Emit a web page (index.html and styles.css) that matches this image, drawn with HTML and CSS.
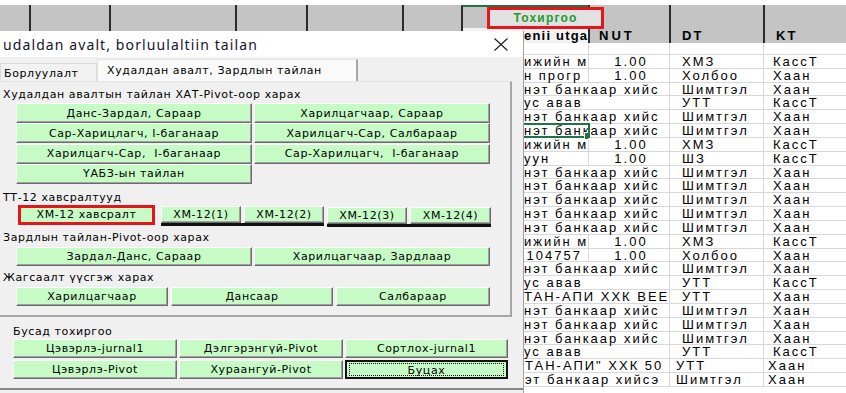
FILE: index.html
```html
<!DOCTYPE html>
<html>
<head>
	<meta charset="utf-8">
	<meta name="viewport" content="width=device-width, initial-scale=1">
	<title>Тохиргоо</title>
	<link rel="stylesheet" href="styles.css">
</head>
<body>
	<div class="sheet">
		<div class="colbar">
			<div></div><div></div><div></div><div></div><div></div><div></div>
			<div class="sel-col"><span class="hd hd-text">enii utga</span></div>
			<div><span class="hd hd-num">NUT</span></div>
			<div><span class="hd">DT</span></div>
			<div><span class="hd">KT</span></div>
		</div>
		<div class="row blank"><i></i><span class="t"></span><span class="n"></span><span class="d"></span><span class="k"></span></div>
		<div class="row"><i></i><span class="t">ижийн м</span><span class="n">1.00</span><span class="d">ХМЗ</span><span class="k">КассТ</span></div>
		<div class="row"><i></i><span class="t">н прогр</span><span class="n">1.00</span><span class="d">Холбоо</span><span class="k">Хаан</span></div>
		<div class="row"><i></i><span class="t w">нэт банкаар хийс</span><span class="d">Шимтгэл</span><span class="k">Хаан</span></div>
		<div class="row"><i></i><span class="t w">ус авав</span><span class="d">УТТ</span><span class="k">КассТ</span></div>
		<div class="row"><i></i><span class="t w">нэт банкаар хийс</span><span class="d">Шимтгэл</span><span class="k">Хаан</span></div>
		<div class="row"><i></i><span class="t w">нэт банкаар хийс</span><span class="d">Шимтгэл</span><span class="k">Хаан</span><b class="cursor"></b></div>
		<div class="row"><i></i><span class="t">ижийн м</span><span class="n">1.00</span><span class="d">ХМЗ</span><span class="k">КассТ</span></div>
		<div class="row"><i></i><span class="t">уун</span><span class="n">1.00</span><span class="d">ШЗ</span><span class="k">КассТ</span></div>
		<div class="row"><i></i><span class="t w">нэт банкаар хийс</span><span class="d">Шимтгэл</span><span class="k">Хаан</span></div>
		<div class="row"><i></i><span class="t w">нэт банкаар хийс</span><span class="d">Шимтгэл</span><span class="k">Хаан</span></div>
		<div class="row"><i></i><span class="t w">нэт банкаар хийс</span><span class="d">Шимтгэл</span><span class="k">Хаан</span></div>
		<div class="row"><i></i><span class="t w">нэт банкаар хийс</span><span class="d">Шимтгэл</span><span class="k">Хаан</span></div>
		<div class="row"><i></i><span class="t w">нэт банкаар хийс</span><span class="d">Шимтгэл</span><span class="k">Хаан</span></div>
		<div class="row"><i></i><span class="t">ижийн м</span><span class="n">1.00</span><span class="d">ХМЗ</span><span class="k">КассТ</span></div>
		<div class="row"><i></i><span class="t num">104757</span><span class="n">1.00</span><span class="d">Холбоо</span><span class="k">Хаан</span></div>
		<div class="row"><i></i><span class="t w">нэт банкаар хийс</span><span class="d">Шимтгэл</span><span class="k">Хаан</span></div>
		<div class="row"><i></i><span class="t w">ус авав</span><span class="d">УТТ</span><span class="k">КассТ</span></div>
		<div class="row"><i></i><span class="t w">ТАН-АПИ ХХК ВЕЕ</span><span class="d">УТТ</span><span class="k">Хаан</span></div>
		<div class="row"><i></i><span class="t w">нэт банкаар хийс</span><span class="d">Шимтгэл</span><span class="k">Хаан</span></div>
		<div class="row"><i></i><span class="t w">нэт банкаар хийс</span><span class="d">Шимтгэл</span><span class="k">Хаан</span></div>
		<div class="row"><i></i><span class="t w">нэт банкаар хийс</span><span class="d">Шимтгэл</span><span class="k">Хаан</span></div>
		<div class="row"><i></i><span class="t w">ус авав</span><span class="d">УТТ</span><span class="k">КассТ</span></div>
		<div class="row shift"><i></i><span class="t w">ТАН-АПИ" ХХК 50</span><span class="d">УТТ</span><span class="k">Хаан</span></div>
		<div class="row shift"><i></i><span class="t w">эт банкаар хийсэ</span><span class="d">Шимтгэл</span><span class="k">Хаан</span></div>
	</div>

	<div class="setting-btn"><span>Тохиргоо</span></div>

	<div class="dialog">
		<div class="titlebar">
			<span class="title">udaldan avalt, borluulaltiin tailan</span>
			<svg class="close" width="16" height="13" viewBox="0 0 16 13">
				<path d="M1.5 0.5L14.5 12.5M14.5 0.5L1.5 12.5" stroke="#1a1a1a" stroke-width="1.1" fill="none"/>
			</svg>
		</div>
		<div class="tabs">
			<span class="tab">Борлуулалт</span>
			<span class="tab active">Худалдан авалт, Зардлын тайлан</span>
		</div>
		<div class="page">
			<div class="cap cap-1">Худалдан авалтын тайлан ХАТ-Pivot-oop харах</div>
			<div class="grid2 grid-1">
				<button>Данс-Зардал, Сараар</button>
				<button>Харилцагчаар, Сараар</button>
				<button>Сар-Харицлагч, I-баганаар</button>
				<button>Харилцагч-Сар, Салбараар</button>
				<button>Харилцагч-Сар,&nbsp; I-баганаар</button>
				<button>Сар-Харилцагч,&nbsp; I-баганаар</button>
				<button>ҮАБЗ-ын тайлан</button>
			</div>

			<div class="cap cap-2">ТТ-12 хавсралтууд</div>
			<div class="xm-row">
				<button class="marked">ХМ-12 хавсралт</button>
				<div class="xm-pair">
					<button>ХМ-12(1)</button>
					<button>ХМ-12(2)</button>
				</div>
				<div class="xm-pair low">
					<button>ХМ-12(3)</button>
					<button class="wider">ХМ-12(4)</button>
				</div>
			</div>

			<div class="cap cap-3">Зардлын тайлан-Pivot-oop харах</div>
			<div class="grid2 grid-3">
				<button>Зардал-Данс, Сараар</button>
				<button>Харилцагчаар, Зардлаар</button>
			</div>

			<div class="cap cap-4">Жагсаалт үүсгэж харах</div>
			<div class="grid3 grid-4">
				<button>Харилцагчаар</button>
				<button>Дансаар</button>
				<button>Салбараар</button>
			</div>
		</div>
		<div class="more">
			<div class="cap">Бусад тохиргоо</div>
			<div class="grid-more">
				<button>Цэвэрлэ-jurnal1</button>
				<button>Дэлгэрэнгүй-Pivot</button>
				<button>Сортлох-jurnal1</button>
				<button>Цэвэрлэ-Pivot</button>
				<button>Хураангуй-Pivot</button>
				<button class="focus"><span>Буцах</span></button>
			</div>
		</div>
	</div>
</body>
</html>
```
FILE: styles.css
```css
* {
	box-sizing: border-box;
}
body {
	margin: 0;
	width: 846px;
	height: 393px;
	overflow: hidden;
	position: relative;
	background: #fff;
	font-family: "Liberation Sans", Arial, sans-serif;
	color: #000;
}

/* spreadsheet behind the form */
.sheet {
	padding-top: 5px;
}
.colbar {
	height: 38px;
	background: #c4c4c4;
	display: grid;
	grid-template-columns: 29px 80px 126px 71px 96px 59px 127px 81px 94px 1fr;
}
.colbar > div {
	border-left: 2px solid #2b2b2b;
	display: flex;
	flex-direction: column;
	justify-content: flex-end;
	min-width: 0;
}
.colbar > div:first-child {
	border-left: 0;
}
.colbar .sel-col {
	border-top: 2px solid #217346;
}
.hd {
	height: 15px;
	line-height: 15px;
	font-weight: bold;
	font-size: 13px;
	letter-spacing: 2px;
	white-space: nowrap;
	overflow: hidden;
	padding-left: 11px;
}
.hd-text {
	background: #f2f2f2;
	padding-left: 61px;
	letter-spacing: 1.2px;
}
.hd-num {
	padding-left: 9px;
	letter-spacing: 3px;
}

.row {
	display: grid;
	grid-template-columns: 461px 128px 81px 94px 1fr;
	height: 13.83px;
	border-bottom: 1px solid #d8d8d8;
	font-size: 13px;
	line-height: 13px;
	letter-spacing: 2px;
	position: relative;
}
.row.blank {
	height: 12px;
}
.row > * {
	border-right: 1px solid #d8d8d8;
	white-space: nowrap;
	overflow-x: clip;
	overflow-y: visible;
	font-style: normal;
}
.t {
	padding-left: 63px;
}
.t.w {
	grid-column: span 2;
}
.t.num {
	text-align: right;
	padding-right: 6px;
}
.n {
	text-align: center;
	padding-left: 4px;
}
.d {
	padding-left: 12px;
}
.k {
	padding-left: 9px;
	border-right: 0;
}
.row.shift .t {
	padding-left: 64px;
}
.row.shift .d {
	padding-left: 6px;
}
.row.shift .k {
	padding-left: 4px;
}
.cursor {
	position: absolute;
	left: 460px;
	top: -1px;
	width: 130px;
	height: 15px;
	border: 2px solid #217346;
}
.cursor::after {
	content: "";
	position: absolute;
	right: -4px;
	bottom: -4px;
	width: 6px;
	height: 6px;
	background: #217346;
	border: 1px solid #fff;
}

/* button placed on the sheet */
.setting-btn {
	position: absolute;
	left: 487px;
	top: 7px;
	width: 117px;
	height: 22px;
	border: 3px solid #e8141c;
	background: #e1e1e1;
	display: flex;
	align-items: center;
	justify-content: center;
}
.setting-btn span {
	font-weight: bold;
	font-size: 12px;
	letter-spacing: 1.2px;
	color: #1f9a2f;
}

/* the form */
.dialog {
	position: absolute;
	left: 0;
	top: 31px;
	width: 524px;
	height: 362px;
	background: #f0f0f0;
	border-right: 1px solid #a3a3a3;
	font-family: "DejaVu Sans", sans-serif;
	font-size: 11px;
	letter-spacing: 0.6px;
	color: #000;
}
.titlebar {
	height: 26px;
	background: #fff;
	display: flex;
	align-items: center;
	justify-content: space-between;
	padding: 0 14px 0 3px;
}
.title {
	font-family: "Noto Sans", sans-serif;
	font-size: 14px;
	letter-spacing: 1.1px;
	color: #14142a;
}
.tabs {
	height: 24px;
	display: flex;
	align-items: flex-end;
}
.tab {
	width: 97px;
	height: 18px;
	line-height: 19px;
	padding-left: 3px;
	border: 1px solid #dadada;
	border-bottom: 0;
	background: #f2f2f2;
	white-space: nowrap;
}
.tab.active {
	width: 261px;
	height: 22px;
	line-height: 21px;
	padding-left: 9px;
	background: #fafafa;
	border-color: #e2e2e2;
	border-right: 2px solid #a6a6a6;
}
.page {
	width: 512px;
	height: 236px;
	border-top: 1px solid #e4e4e4;
	border-right: 2px solid #a6a6a6;
	border-bottom: 2px solid #a6a6a6;
}
.cap {
	height: 13px;
	line-height: 13px;
	padding-left: 3px;
	white-space: nowrap;
}
.cap-1 { margin-top: 6px; }
.cap-2 { margin-top: 7px; }
.cap-3 { margin-top: 4px; }
.cap-4 { margin-top: 5px; }

button {
	font: inherit;
	letter-spacing: inherit;
	color: #000;
	padding: 0;
	margin: 0;
	background: #c6fbc6;
	border: 1px solid;
	border-color: #fbfbfb #6c6c6c #6c6c6c #fbfbfb;
	box-shadow: inset -1px -1px 0 #a0a0a0;
	white-space: nowrap;
}
.grid2 {
	display: grid;
	grid-template-columns: 236px 236px;
	column-gap: 2px;
	margin-left: 16px;
}
.grid-1 {
	margin-top: 2px;
	grid-auto-rows: 20px;
	row-gap: 0.33px;
}
.grid-3 {
	margin-top: 3px;
	grid-auto-rows: 19px;
}
.grid3 {
	display: grid;
	grid-template-columns: 152px 162px 154px;
	column-gap: 3px;
	margin-left: 16px;
	grid-auto-rows: 19px;
}
.grid-4 {
	margin-top: 3px;
}

.xm-row {
	display: flex;
	align-items: flex-start;
	margin-top: 1px;
	margin-left: 18px;
	height: 22px;
}
.xm-row .marked {
	width: 137px;
	height: 20px;
	border: 3px solid #e8141c;
	box-shadow: none;
	margin-right: 6px;
}
.xm-pair {
	display: flex;
	gap: 3px;
	margin-top: 1px;
	margin-right: 3px;
	border-bottom: 3px solid #111;
}
.xm-pair.low {
	margin-top: 2px;
	margin-right: 0;
}
.xm-pair button {
	width: 80px;
	height: 17px;
}
.xm-pair .wider {
	width: 81px;
}

.more {
	height: 73px;
	padding-top: 8px;
	border-bottom: 2px solid #858585;
}
.more .cap {
	padding-left: 13px;
}
.grid-more {
	display: grid;
	grid-template-columns: 164px 164px 163px;
	column-gap: 2px;
	grid-auto-rows: 19px;
	row-gap: 2px;
	margin: 1px 0 0 13px;
}
.grid-more .focus {
	border: 2px solid #111;
	box-shadow: none;
	padding: 1px 2px;
}
.grid-more .focus span {
	display: block;
	height: 100%;
	border: 1px dotted #111;
	line-height: 13px;
}
```
